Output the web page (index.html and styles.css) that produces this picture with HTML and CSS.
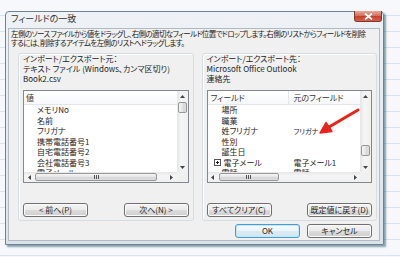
FILE: index.html
```html
<!DOCTYPE html>
<html lang="ja">
<head>
    <meta charset="UTF-8">
    <title>フィールドの一致</title>
    <link rel="stylesheet" href="styles.css">
</head>
<body>
    <div class="window">
        <div class="titlebar">
            <span class="title">フィールドの一致</span>
            <span class="close">
                <svg width="9" height="7" viewBox="0 0 9 7"><path d="M1 0.5 L8 6.5 M8 0.5 L1 6.5" stroke="#fff" stroke-width="1.8"/></svg>
            </span>
        </div>

        <div class="client">
            <p class="intro">左側のソース ファイルから値をドラッグし、右側の適切なフィールド位置でドロップします。右側のリストからフィールドを削除<br>するには、削除するアイテムを左側のリストへドラッグします。</p>

            <div class="panes">
                <!-- インポート元 -->
                <div class="group">
                    <div class="source">インポート/エクスポート元：<br>テキスト ファイル (Windows、カンマ区切り)<br>Book2.csv</div>
                    <div class="list">
                        <div class="list-body">
                            <div class="list-head"><span class="col-single">値</span></div>
                            <div class="row"><span class="item">メモリNo</span></div>
                            <div class="row"><span class="item">名前</span></div>
                            <div class="row"><span class="item">フリガナ</span></div>
                            <div class="row"><span class="item">携帯電話番号1</span></div>
                            <div class="row"><span class="item">自宅電話番号2</span></div>
                            <div class="row"><span class="item">会社電話番号3</span></div>
                            <div class="row"><span class="item">電子メール</span></div>
                        </div>
                        <div class="vscroll">
                            <span class="arrow"><svg width="5" height="3"><path d="M0 3 L2.5 0 L5 3Z" fill="#444"/></svg></span>
                            <span class="track"><span class="thumb-v" style="margin-top: 1px"></span></span>
                            <span class="arrow"><svg width="5" height="3"><path d="M0 0 L2.5 3 L5 0Z" fill="#444"/></svg></span>
                        </div>
                        <div class="hscroll">
                            <span class="arrow"><svg width="3" height="5"><path d="M3 0 L0 2.5 L3 5Z" fill="#444"/></svg></span>
                            <span class="track"><span class="thumb-h" style="width: 122px"><i class="grip"></i></span></span>
                            <span class="arrow"><svg width="3" height="5"><path d="M0 0 L3 2.5 L0 5Z" fill="#444"/></svg></span>
                        </div>
                        <div class="corner"></div>
                    </div>
                    <div class="group-buttons">
                        <button class="btn">&lt; 前へ(P)</button>
                        <button class="btn">次へ(N) &gt;</button>
                    </div>
                </div>

                <!-- エクスポート先 -->
                <div class="group">
                    <div class="source">インポート/エクスポート先：<br>Microsoft Office Outlook<br>連絡先</div>
                    <div class="list">
                        <div class="list-body">
                            <div class="list-head"><span class="col-a">フィールド</span><span class="col-b">元のフィールド</span></div>
                            <div class="row"><span class="col-a indent">場所</span><span class="col-b"></span></div>
                            <div class="row"><span class="col-a indent">職業</span><span class="col-b"></span></div>
                            <div class="row"><span class="col-a indent">姓フリガナ</span><span class="col-b small">フリガナ</span></div>
                            <div class="row"><span class="col-a indent">性別</span><span class="col-b"></span></div>
                            <div class="row"><span class="col-a indent">誕生日</span><span class="col-b"></span></div>
                            <div class="row">
                                <span class="col-a"><svg class="expander" width="7" height="7" viewBox="0 0 7 7"><rect x="0.5" y="0.5" width="6" height="6" fill="#fff" stroke="#555"/><path d="M2 3.5 H5 M3.5 2 V5" stroke="#222"/></svg>電子メール</span><span class="col-b">電子メール1</span>
                            </div>
                            <div class="row"><span class="col-a indent">電話</span><span class="col-b">電話</span></div>
                        </div>
                        <div class="vscroll">
                            <span class="arrow"><svg width="5" height="3"><path d="M0 3 L2.5 0 L5 3Z" fill="#444"/></svg></span>
                            <span class="track"><span class="thumb-v" style="margin-top: 44px"></span></span>
                            <span class="arrow"><svg width="5" height="3"><path d="M0 0 L2.5 3 L5 0Z" fill="#444"/></svg></span>
                        </div>
                        <div class="hscroll">
                            <span class="arrow"><svg width="3" height="5"><path d="M3 0 L0 2.5 L3 5Z" fill="#444"/></svg></span>
                            <span class="track"><span class="thumb-h" style="width: 60px"><i class="grip"></i></span></span>
                            <span class="arrow"><svg width="3" height="5"><path d="M0 0 L3 2.5 L0 5Z" fill="#444"/></svg></span>
                        </div>
                        <div class="corner"></div>

                        <!-- 注目の矢印 -->
                        <svg class="pointer" width="160" height="50" viewBox="0 0 160 50">
                            <path d="M150 19 L121 36" stroke="#e8231b" stroke-width="3" stroke-linecap="round"/>
                            <path d="M112 42 L118 31.5 L124 40.5Z" fill="#e8231b" stroke="#e8231b" stroke-width="1.5" stroke-linejoin="round"/>
                        </svg>
                    </div>
                    <div class="group-buttons">
                        <button class="btn">すべてクリア(C)</button>
                        <button class="btn">既定値に戻す(D)</button>
                    </div>
                </div>
            </div>

            <div class="dialog-buttons">
                <button class="btn btn-default">OK</button>
                <button class="btn">キャンセル</button>
            </div>
        </div>
    </div>
</body>
</html>
```

FILE: styles.css
```css
/* Base */
* {
    margin: 0;
    padding: 0;
    box-sizing: border-box;
}

body {
    width: 400px;
    height: 257px;
    overflow: hidden;
    padding: 11px 0 0 5px;
    font-family: "Noto Sans CJK JP", sans-serif;
    font-feature-settings: "palt";
    font-size: 8px;
    color: #1e1e1e;
    background-color: #f6f8fb;
    background-image: repeating-linear-gradient(to bottom, transparent 0, transparent 15px, #d9e3ee 15px, #d9e3ee 16px);
}

/* Window frame */
.window {
    width: 379px;
    height: 234px;
    border: 1px solid #6f8193;
    border-radius: 4px 4px 0 0;
    background: linear-gradient(to bottom, #eef2f6, #dbe3ea);
    box-shadow: 2px 2px 2px rgba(40, 90, 110, 0.55);
    display: flex;
    flex-direction: column;
}

.titlebar {
    height: 16px;
    display: flex;
    justify-content: space-between;
    align-items: flex-start;
    padding-left: 5px;
}

.title {
    font-size: 9px;
    line-height: 14px;
    color: #333;
}

.close {
    width: 28px;
    height: 11px;
    margin-top: -1px;
    margin-right: 1px;
    border: 1px solid #7d3a30;
    border-top: none;
    border-radius: 0 0 3px 3px;
    background: linear-gradient(to bottom, #e8a89c 0%, #d66b58 50%, #c6402a 55%, #d9604a 100%);
    display: flex;
    align-items: center;
    justify-content: center;
}

/* Client area */
.client {
    flex: 1;
    margin: 0 3px 3px 2px;
    border: 1px solid #b1b9c2;
    background-color: #f0f0f0;
    padding: 1px 2px 0;
    display: flex;
    flex-direction: column;
}

.intro {
    font-size: 7.5px;
    letter-spacing: -0.6px;
    line-height: 8.5px;
    white-space: nowrap;
    color: #222;
}

.panes {
    margin-top: 6px;
    margin-left: 7px;
    display: flex;
    gap: 8px;
}

/* Group boxes */
.group {
    width: 176px;
    height: 168px;
    border: 1px solid #d5dde3;
    border-radius: 3px;
    box-shadow: inset 1px 1px 0 #fff;
    padding: 0 4px 3px;
    display: flex;
    flex-direction: column;
}

.source {
    line-height: 10px;
    white-space: nowrap;
    color: #222;
}

/* List view */
.list {
    position: relative;
    margin-top: 6px;
    height: 93px;
    border: 1px solid #828790;
    background-color: #fff;
    display: grid;
    grid-template-columns: 1fr 11px;
    grid-template-rows: 1fr 10px;
}

.list-body {
    overflow: hidden;
}

.list-head {
    height: 14px;
    line-height: 13px;
    display: flex;
    border-bottom: 1px solid #e2e5ea;
    background: linear-gradient(to bottom, #fff, #f7f8fa);
    color: #333;
}

.row {
    height: 10.5px;
    line-height: 10.5px;
    display: flex;
    white-space: nowrap;
}

.col-single {
    padding-left: 2px;
}

.item {
    padding-left: 13px;
}

.col-a {
    width: 81px;
    padding-left: 3px;
    display: flex;
    align-items: center;
    gap: 3px;
}

.list-head .col-a {
    border-right: 1px solid #e2e5ea;
}

.col-a.indent {
    padding-left: 14px;
}

.col-b {
    padding-left: 5px;
}

.col-b.small {
    font-size: 7px;
}

.expander {
    display: block;
    margin-left: 3px;
}

/* Scrollbars */
.vscroll, .hscroll {
    display: flex;
    background: linear-gradient(to right, #e6e6e6, #f5f5f5 40%, #f0f0f0);
}

.vscroll {
    flex-direction: column;
}

.hscroll {
    background: linear-gradient(to bottom, #e6e6e6, #f5f5f5 40%, #f0f0f0);
}

.arrow {
    width: 10px;
    height: 10px;
    flex: none;
    display: flex;
    align-items: center;
    justify-content: center;
}

.vscroll .arrow {
    width: 11px;
}

.track {
    flex: 1;
    display: flex;
}

.vscroll .track {
    flex-direction: column;
    align-items: center;
}

.thumb-v {
    width: 9px;
    height: 11px;
    border: 1px solid #979797;
    border-radius: 2px;
    background: linear-gradient(to right, #f6f6f6, #e4e4e4 50%, #d6d6d6 51%, #dedede);
}

.thumb-h {
    height: 8px;
    margin: 1px 0 0 1px;
    border: 1px solid #979797;
    border-radius: 2px;
    background: linear-gradient(to bottom, #f6f6f6, #e4e4e4 50%, #d6d6d6 51%, #dedede);
    display: flex;
    align-items: center;
    justify-content: center;
}

.grip {
    width: 5px;
    height: 4px;
    background: repeating-linear-gradient(to right, #555 0, #555 1px, transparent 1px, transparent 2px);
}

.corner {
    background-color: #f0f0f0;
}

.pointer {
    position: absolute;
    left: 0;
    top: 0;
}

/* Buttons */
.btn {
    width: 65px;
    height: 14px;
    border: 1px solid #707070;
    border-radius: 3px;
    background: linear-gradient(to bottom, #f4f4f4 0%, #ebebeb 50%, #dcdcdc 51%, #cfcfcf 100%);
    box-shadow: inset 0 0 0 1px #fbfbfb;
    font-family: inherit;
    font-feature-settings: "palt";
    font-size: 8px;
    line-height: 12px;
    color: #1e1e1e;
}

.group-buttons {
    margin-top: auto;
    display: flex;
    justify-content: space-between;
}

.dialog-buttons {
    margin-top: 3px;
    padding-right: 5px;
    display: flex;
    justify-content: flex-end;
    gap: 7px;
}

.btn-default {
    border-color: #4b9ccf;
    box-shadow: inset 0 0 0 1px #bfe6fa;
    background: linear-gradient(to bottom, #f6fbfe 0%, #eaf4fa 50%, #dcebf5 51%, #d2e6f2 100%);
}
```
